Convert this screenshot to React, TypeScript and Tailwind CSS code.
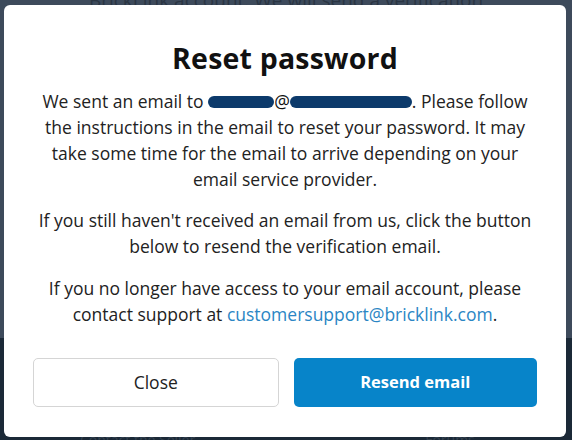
import React from "react";

export default function App() {
  const font = { fontFamily: "'Open Sans', 'Noto Sans', sans-serif" };
  return (
    <div className="relative w-[572px] h-[440px] overflow-hidden" style={font}>
      <div className="flex flex-col h-full">
        <div className="h-[338px] bg-[#3d4a5b] flex justify-center">
          <p className="text-[19px] text-[#2a3543] -mt-[12px] leading-[24px]">BrickLink account. We will send a verification</p>
        </div>
        <div className="flex-1 bg-[#1b2937] flex items-end pl-[80px] gap-[230px]">
          <span className="text-[#33414f] text-[14px] translate-y-[10px]">Contact the Seller</span>
          <span className="text-[#33414f] text-[14px] translate-y-[10px]">Forums</span>
        </div>
      </div>
      <div className="absolute left-[4px] top-[5px] w-[562px] h-[432px] bg-white rounded-[6px] flex flex-col items-center pt-[36px] px-[28px]">
        <h1 className="text-[28.5px] font-bold text-[#111] leading-[34px] tracking-[0.2px]">Reset password</h1>
        <div className="mt-[13px] w-full flex flex-col items-center text-[17.5px] leading-[26px] text-[#222] text-center">
          <p className="w-full">
            We sent an email to{" "}
            <span className="inline-block align-middle w-[66px] h-[12px] rounded-full bg-[#0c3a6b] -mt-[3px]"></span>
            <span className="text-[#111]">@</span>
            <span className="inline-block align-middle w-[122px] h-[12px] rounded-full bg-[#0c3a6b] -mt-[3px]"></span>
            . Please follow the instructions in the email to reset your password. It may take some time for the email to arrive depending on your email service provider.
          </p>
          <p className="mt-[15px] w-full">
            If you still haven't received an email from us, click the button below to resend the verification email.
          </p>
          <p className="mt-[16px] w-full">
            If you no longer have access to your email account, please contact support at{" "}
            <span className="text-[#2b86c4]">customersupport@bricklink.com</span>.
          </p>
        </div>
        <div className="mt-auto mb-[30px] w-full flex gap-[15px] px-[1px]">
          <button className="flex-1 h-[49px] rounded-[5px] border border-[#d5d5d5] bg-white text-[17.5px] text-[#222]">Close</button>
          <button className="flex-1 h-[49px] rounded-[5px] bg-[#0784c9] text-[16.5px] font-bold text-white">Resend email</button>
        </div>
      </div>
    </div>
  );
}
